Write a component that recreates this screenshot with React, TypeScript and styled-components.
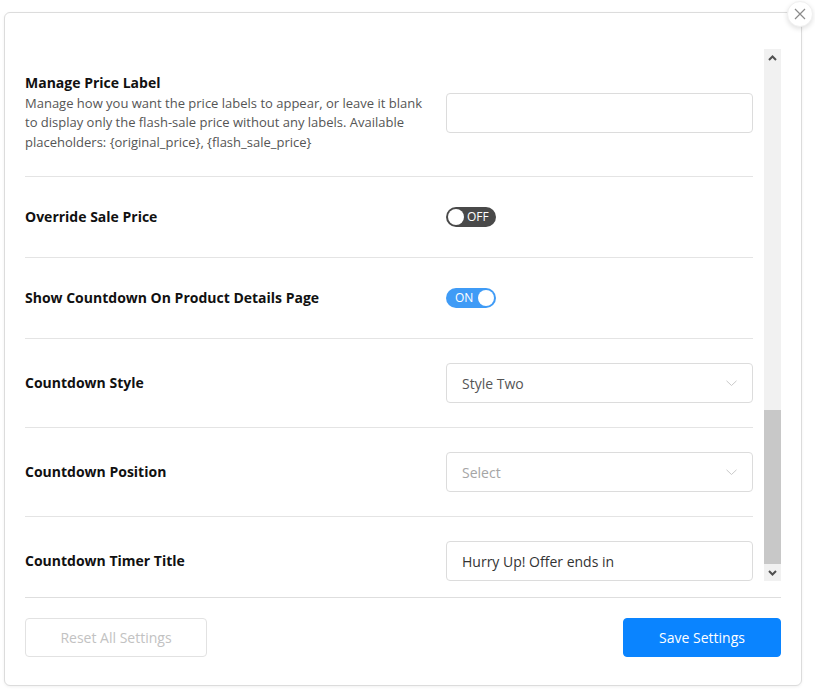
import styled, { createGlobalStyle } from 'styled-components'

const GlobalStyle = createGlobalStyle`
  html, body {
    margin: 0;
    padding: 0;
    background: #fff;
  }
  body {
    font-family: "Open Sans", "Liberation Sans", Arial, sans-serif;
    color: #222;
  }
  * { box-sizing: border-box; }
`

const Page = styled.div`
  padding: 12px 13px 6px 4px;
`

const Modal = styled.div`
  position: relative;
  width: 798px;
  height: 674px;
  border: 1px solid #dcdcdc;
  border-radius: 6px;
  background: #fff;
  box-shadow: 0 1px 3px rgba(0, 0, 0, 0.06);
  padding: 36px 20px 0 20px;
  display: flex;
  flex-direction: column;
`

const CloseButton = styled.button`
  position: absolute;
  top: -12px;
  right: -12px;
  width: 26px;
  height: 26px;
  border-radius: 50%;
  border: 1px solid #f0f0f0;
  background: #fff;
  box-shadow: 0 2px 5px rgba(0, 0, 0, 0.12);
  display: flex;
  align-items: center;
  justify-content: center;
  padding: 0;
  cursor: pointer;
`

const Body = styled.div`
  display: flex;
  gap: 11px;
  height: 532px;
`

const Scroller = styled.div`
  width: 728px;
  overflow: hidden;
`

const Row = styled.div`
  display: grid;
  grid-template-columns: 421px 307px;
  align-items: center;
  padding: 24px 0;
  border-bottom: 1px solid #e4e4e4;
`

const LabelBlock = styled.div`
  padding-right: 16px;
`

const Title = styled.div`
  font-size: 14px;
  font-weight: 700;
  line-height: 20px;
  color: #111;
`

const Description = styled.div`
  font-size: 13px;
  line-height: 19.5px;
  color: #555;
  padding-top: 0.5px;
`

const Field = styled.div<{ $muted?: boolean; $dark?: boolean }>`
  height: 40px;
  border: 1px solid #dcdcdc;
  border-radius: 4px;
  padding: 0 15px;
  display: flex;
  align-items: center;
  justify-content: space-between;
  font-size: 14px;
  color: ${({ $muted, $dark }) => ($muted ? '#a5a5a5' : $dark ? '#333' : '#555')};
  background: #fff;
`

const ToggleWrap = styled.div`
  height: 32px;
  display: flex;
  align-items: center;
`

const Toggle = styled.div<{ $on: boolean }>`
  width: 50px;
  height: 20px;
  border-radius: 10px;
  padding: ${({ $on }) => ($on ? '2px 2px 2px 9px' : '2px')};
  display: flex;
  align-items: center;
  flex-direction: ${({ $on }) => ($on ? 'row-reverse' : 'row')};
  gap: 3px;
  background: ${({ $on }) => ($on ? '#3f9bf6' : '#494949')};
`

const Knob = styled.span`
  width: 16px;
  height: 16px;
  border-radius: 50%;
  background: #fff;
  flex: none;
`

const ToggleText = styled.span`
  font-size: 12px;
  line-height: 16px;
  color: #fff;
  flex: 1;
  text-align: left;
`

const ScrollBar = styled.div`
  width: 17px;
  background: #f1f1f1;
  display: flex;
  flex-direction: column;
`

const ArrowBox = styled.div`
  height: 17px;
  display: flex;
  align-items: center;
  justify-content: center;
  flex: none;
`

const Track = styled.div`
  flex: 1;
  display: flex;
  flex-direction: column;
  justify-content: flex-end;
`

const Thumb = styled.div`
  height: 154px;
  background: #c8c8c8;
`

const Footer = styled.div`
  margin-top: 16px;
  border-top: 1px solid #dedede;
  padding-top: 20px;
  display: flex;
  justify-content: space-between;
`

const Button = styled.button<{ $primary?: boolean }>`
  height: 39px;
  width: ${({ $primary }) => ($primary ? '158px' : '182px')};
  border-radius: 4px;
  font-family: inherit;
  font-size: 14px;
  cursor: pointer;
  border: 1px solid ${({ $primary }) => ($primary ? '#0a84ff' : '#e2e2e2')};
  background: ${({ $primary }) => ($primary ? '#0a84ff' : '#fff')};
  color: ${({ $primary }) => ($primary ? '#fff' : '#c2c2c2')};
`

const Chevron = () => (
  <svg width="11" height="7" viewBox="0 0 11 7">
    <polyline points="0.5,0.8 5.5,5.5 10.5,0.8" fill="none" stroke="#c9c9c9" strokeWidth="1" />
  </svg>
)

const Caret = ({ up }: { up?: boolean }) => (
  <svg width="9" height="6" viewBox="0 0 9 6">
    <polyline
      points={up ? '1,5 4.5,1.5 8,5' : '1,1 4.5,4.5 8,1'}
      fill="none"
      stroke="#505050"
      strokeWidth="2"
    />
  </svg>
)

const Switch = ({ on }: { on: boolean }) => (
  <ToggleWrap>
    <Toggle $on={on}>
      <Knob />
      <ToggleText>{on ? 'ON' : 'OFF'}</ToggleText>
    </Toggle>
  </ToggleWrap>
)

export default function App() {
  return (
    <>
      <GlobalStyle />
      <Page>
        <Modal>
          <CloseButton aria-label="Close">
            <svg width="12" height="12" viewBox="0 0 12 12">
              <path d="M1 1 L11 11 M11 1 L1 11" stroke="#8a8a8a" strokeWidth="1.2" fill="none" />
            </svg>
          </CloseButton>

          <Body>
            <Scroller>
              <Row>
                <LabelBlock>
                  <Title>Manage Price Label</Title>
                  <Description>
                    Manage how you want the price labels to appear, or leave it blank to display only the
                    flash-sale price without any labels. Available placeholders: {'{original_price}, {flash_sale_price}'}
                  </Description>
                </LabelBlock>
                <Field />
              </Row>

              <Row>
                <Title>Override Sale Price</Title>
                <Switch on={false} />
              </Row>

              <Row>
                <Title>Show Countdown On Product Details Page</Title>
                <Switch on />
              </Row>

              <Row>
                <Title>Countdown Style</Title>
                <Field>
                  Style Two
                  <Chevron />
                </Field>
              </Row>

              <Row>
                <Title>Countdown Position</Title>
                <Field $muted>
                  Select
                  <Chevron />
                </Field>
              </Row>

              <Row>
                <Title>Countdown Timer Title</Title>
                <Field $dark>Hurry Up! Offer ends in</Field>
              </Row>
            </Scroller>

            <ScrollBar>
              <ArrowBox>
                <Caret up />
              </ArrowBox>
              <Track>
                <Thumb />
              </Track>
              <ArrowBox>
                <Caret />
              </ArrowBox>
            </ScrollBar>
          </Body>

          <Footer>
            <Button>Reset All Settings</Button>
            <Button $primary>Save Settings</Button>
          </Footer>
        </Modal>
      </Page>
    </>
  )
}
